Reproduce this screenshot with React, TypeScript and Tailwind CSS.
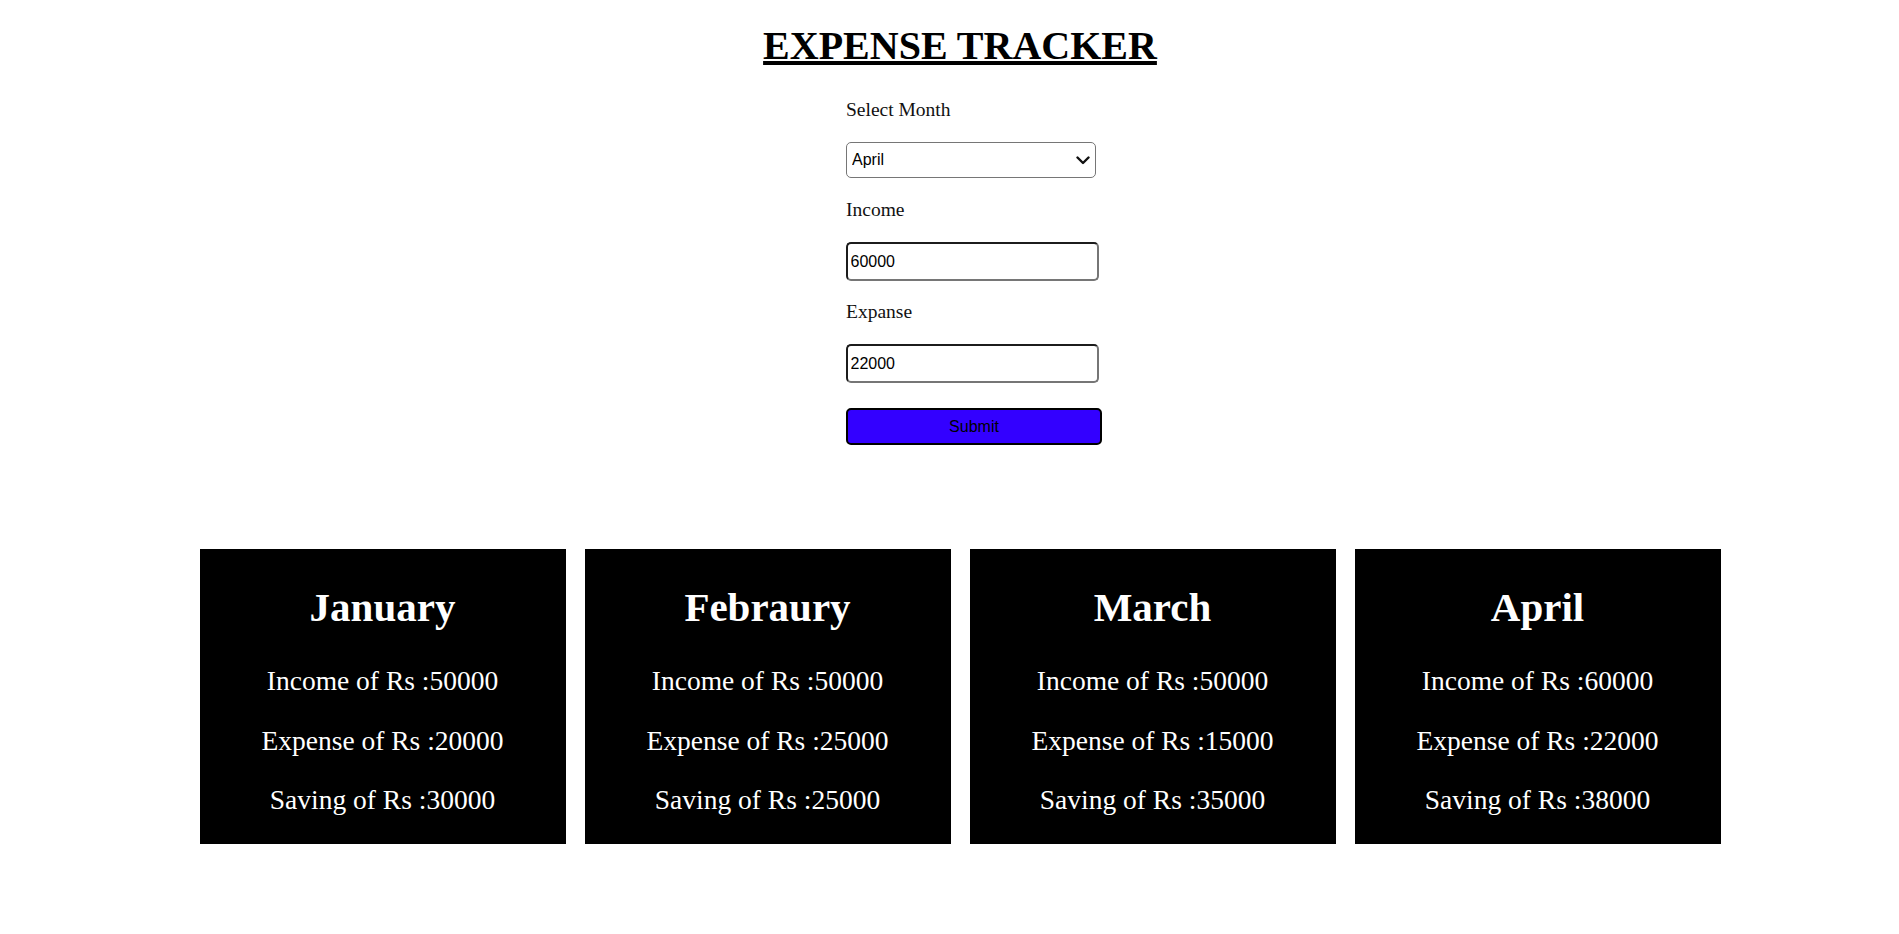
import { useState } from "react";

type MonthRecord = {
  month: string;
  income: number;
  expense: number;
};

const records: MonthRecord[] = [
  { month: "January", income: 50000, expense: 20000 },
  { month: "Febraury", income: 50000, expense: 25000 },
  { month: "March", income: 50000, expense: 15000 },
  { month: "April", income: 60000, expense: 22000 },
];

const months = [
  "January",
  "Febraury",
  "March",
  "April",
  "May",
  "June",
  "July",
  "August",
  "September",
  "October",
  "November",
  "December",
];

function MonthCard({ record }: { record: MonthRecord }) {
  return (
    <div className="flex w-[366px] flex-col items-center bg-black pt-[35px] pb-[29px] text-white">
      <h2 className="text-[41px] leading-[46px] font-bold">{record.month}</h2>
      <p className="mt-[36px] text-[27.5px] leading-[30px]">
        Income of Rs :{record.income}
      </p>
      <p className="mt-[30px] text-[27.5px] leading-[30px]">
        Expense of Rs :{record.expense}
      </p>
      <p className="mt-[29px] text-[27.5px] leading-[30px]">
        Saving of Rs :{record.income - record.expense}
      </p>
    </div>
  );
}

export default function App() {
  const [month, setMonth] = useState("April");
  const [income, setIncome] = useState("60000");
  const [expense, setExpense] = useState("22000");

  return (
    <div className="min-h-screen bg-white pl-[21px] font-['Liberation_Serif','Times_New_Roman',serif] text-black">
      <h1 className="mt-[25px] text-center text-[40px] leading-[42px] font-bold underline">
        EXPENSE TRACKER
      </h1>

      <form
        className="mx-auto flex w-[228px] flex-col"
        onSubmit={(e) => e.preventDefault()}
      >
        <label className="mt-[32px] text-[19.5px] leading-[22px] text-[#111]">
          Select Month
        </label>
        <div className="relative mt-[21px] h-[36px] w-[250px]">
          <select
            value={month}
            onChange={(e) => setMonth(e.target.value)}
            className="h-full w-full appearance-none rounded-[5px] border border-[#767676] bg-white pl-[5px] font-['Liberation_Sans',Arial,sans-serif] text-[16px] text-black"
          >
            {months.map((m) => (
              <option key={m} value={m}>
                {m}
              </option>
            ))}
          </select>
          <svg
            className="pointer-events-none absolute top-[14px] right-[6px]"
            width="14"
            height="9"
            viewBox="0 0 14 9"
            fill="none"
          >
            <path
              d="M1.5 1.5 L7 7 L12.5 1.5"
              stroke="#111"
              strokeWidth="2.4"
              strokeLinecap="round"
              strokeLinejoin="round"
            />
          </svg>
        </div>

        <label className="mt-[21px] text-[19.5px] leading-[22px] text-[#111]">
          Income
        </label>
        <input
          value={income}
          onChange={(e) => setIncome(e.target.value)}
          className="mt-[21px] h-[39px] w-[253px] shrink-0 rounded-[5px] border-2 border-t-[#1c1c1c] border-r-[#767676] border-b-[#767676] border-l-[#1c1c1c] bg-white px-[2.5px] font-['Liberation_Sans',Arial,sans-serif] text-[16px] text-black outline-none"
        />

        <label className="mt-[20px] text-[19.5px] leading-[22px] text-[#111]">
          Expanse
        </label>
        <input
          value={expense}
          onChange={(e) => setExpense(e.target.value)}
          className="mt-[21px] h-[39px] w-[253px] shrink-0 rounded-[5px] border-2 border-t-[#1c1c1c] border-r-[#767676] border-b-[#767676] border-l-[#1c1c1c] bg-white px-[2.5px] font-['Liberation_Sans',Arial,sans-serif] text-[16px] text-black outline-none"
        />

        <button
          type="submit"
          className="mt-[25px] h-[37px] w-[256px] shrink-0 rounded-[5px] border-2 border-black bg-[#3300ff] font-['Liberation_Sans',Arial,sans-serif] text-[16px] text-black"
        >
          Submit
        </button>
      </form>

      <div className="mt-[104px] flex justify-center gap-[19px] pb-[90px]">
        {records.map((r) => (
          <MonthCard key={r.month} record={r} />
        ))}
      </div>
    </div>
  );
}
